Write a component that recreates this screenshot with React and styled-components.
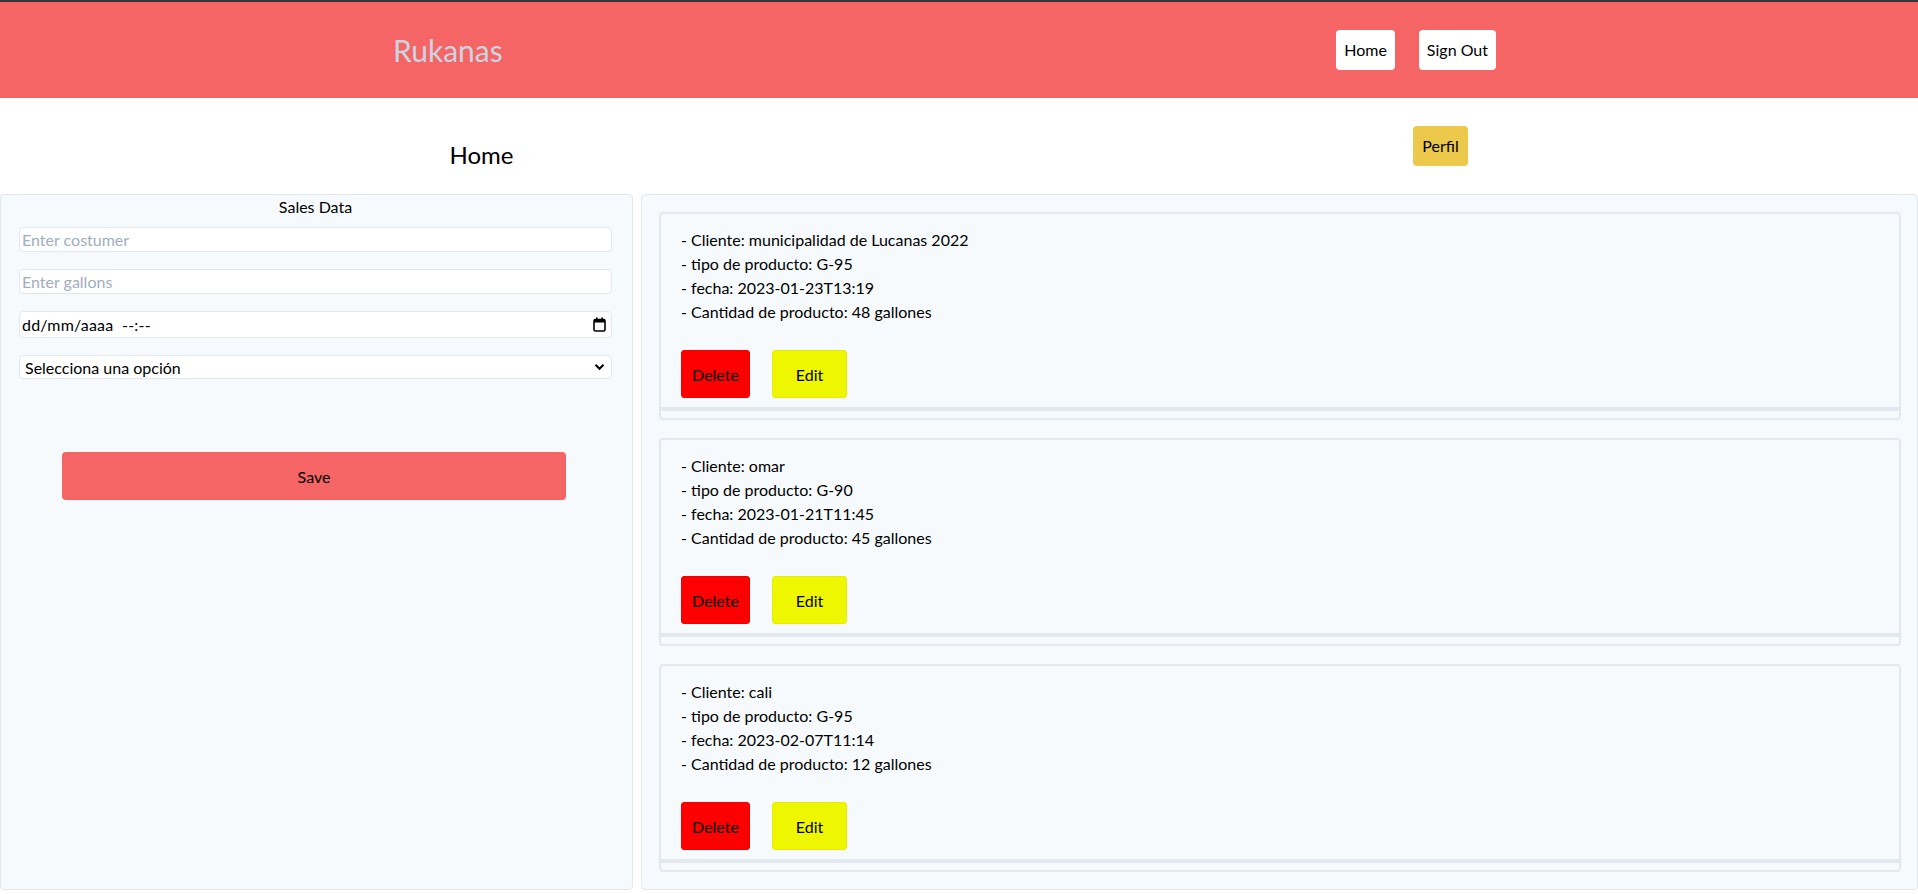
import React from "react";
import styled, { createGlobalStyle, css } from "styled-components";

const GlobalStyle = createGlobalStyle`
  * { box-sizing: border-box; }
  html, body { margin: 0; padding: 0; background: #ffffff; }
  body {
    font-family: Lato, "Open Sans", "Noto Sans", sans-serif;
    font-size: 16px;
    color: #000000;
  }
  button, input, select { font-family: inherit; }
`;

const Header = styled.header`
  display: flex;
  align-items: center;
  justify-content: space-between;
  height: 98px;
  border-top: 2px solid #35363a;
  background: #f56565;
  padding: 0 422px 0 393px;
`;

const Brand = styled.div`
  font-size: 30px;
  line-height: 1;
  color: #cbd5e0;
`;

const NavGroup = styled.nav`
  display: flex;
  gap: 24px;
`;

const NavButton = styled.button`
  background: #ffffff;
  border: none;
  border-radius: 4px;
  padding: 8px;
  font-size: 16px;
  line-height: 24px;
  color: #000000;
  cursor: pointer;
`;

const SubBar = styled.div`
  display: grid;
  grid-template-columns: 1fr 1fr;
  align-items: center;
  justify-items: center;
  height: 96px;
`;

const PageTitle = styled.h2`
  margin: 0 0 0 4px;
  padding-top: 18px;
  font-size: 24px;
  font-weight: 400;
  line-height: 32px;
`;

const ProfileButton = styled.button`
  background: #ecc94b;
  border: none;
  border-radius: 4px;
  padding: 8px 9px;
  margin-left: 4px;
  font-size: 16px;
  line-height: 24px;
  color: #000000;
  cursor: pointer;
`;

const Main = styled.main`
  display: flex;
  gap: 8px;
  height: 696px;
`;

const Panel = styled.section`
  background: #f7fafc;
  border: 1px solid #e2e8f0;
  border-radius: 4px;
`;

const FormPanel = styled(Panel)`
  flex: none;
  width: 633px;
  padding: 0 20px 0 18px;
  display: flex;
  flex-direction: column;
`;

const FormTitle = styled.div`
  text-align: center;
  line-height: 24px;
  margin-bottom: 8px;
`;

const Fields = styled.div`
  display: flex;
  flex-direction: column;
  gap: 17px;
`;

const fieldBase = css`
  width: 100%;
  background: #ffffff;
  border: 1px solid #e2e8f0;
  border-radius: 4px;
  font-size: 16px;
  color: #000000;
`;

const TextInput = styled.input`
  ${fieldBase};
  height: 25px;
  padding: 1px 2px;
  outline: none;
  &::placeholder { color: #a0aec0; }
`;

const DateField = styled.div`
  ${fieldBase};
  height: 27px;
  padding: 0 5px 0 2px;
  display: flex;
  align-items: center;
  justify-content: space-between;
`;

const DateText = styled.span`
  letter-spacing: 0.2px;
  white-space: pre;
`;

const SelectWrap = styled.div`
  position: relative;
`;

const Select = styled.select`
  ${fieldBase};
  height: 24px;
  padding: 0 24px 0 5px;
  appearance: none;
  -webkit-appearance: none;
  outline: none;
`;

const Chevron = styled.svg`
  position: absolute;
  right: 7px;
  top: 8px;
  pointer-events: none;
`;

const SaveButton = styled.button`
  align-self: center;
  width: 504px;
  height: 48px;
  margin-top: 73px;
  margin-left: -3px;
  background: #f56565;
  border: none;
  border-radius: 4px;
  font-size: 16px;
  color: #000000;
  cursor: pointer;
`;

const ListPanel = styled(Panel)`
  flex: 1;
  padding: 17px 16px 17px 17px;
  display: flex;
  flex-direction: column;
  gap: 18px;
`;

const Card = styled.article`
  border: 2px solid #e2e8f0;
  border-radius: 4px;
  padding-bottom: 7px;
`;

const CardBody = styled.div`
  padding: 14px 20px 9px 20px;
  border-bottom: 4px solid #e2e8f0;
`;

const Line = styled.p`
  margin: 0;
  line-height: 24px;
`;

const Actions = styled.div`
  display: flex;
  gap: 22px;
  margin-top: 26px;
`;

const ActionButton = styled.button`
  width: ${(p) => (p.$variant === "delete" ? "69px" : "75px")};
  height: 48px;
  padding: 0;
  border: 1px solid ${(p) => (p.$variant === "delete" ? "#f00000" : "#e6ee00")};
  border-radius: 3px;
  background: ${(p) => (p.$variant === "delete" ? "#ff0000" : "#eef700")};
  font-size: 16px;
  color: #000000;
  cursor: pointer;
`;

const sales = [
  { cliente: "municipalidad de Lucanas 2022", tipo: "G-95", fecha: "2023-01-23T13:19", cantidad: 48 },
  { cliente: "omar", tipo: "G-90", fecha: "2023-01-21T11:45", cantidad: 45 },
  { cliente: "cali", tipo: "G-95", fecha: "2023-02-07T11:14", cantidad: 12 },
];

function CalendarIcon() {
  return (
    <svg width="13" height="15" viewBox="0 0 13 15" aria-hidden="true">
      <rect x="1" y="2.5" width="11" height="11.5" rx="1.5" fill="none" stroke="#000" strokeWidth="1.6" />
      <rect x="1" y="2.5" width="11" height="3" fill="#000" />
      <rect x="3" y="0.5" width="1.6" height="3" fill="#000" />
      <rect x="8.4" y="0.5" width="1.6" height="3" fill="#000" />
    </svg>
  );
}

export default function App() {
  return (
    <>
      <GlobalStyle />
      <Header>
        <Brand>Rukanas</Brand>
        <NavGroup>
          <NavButton>Home</NavButton>
          <NavButton>Sign Out</NavButton>
        </NavGroup>
      </Header>
      <SubBar>
        <PageTitle>Home</PageTitle>
        <ProfileButton>Perfil</ProfileButton>
      </SubBar>
      <Main>
        <FormPanel>
          <FormTitle>Sales Data</FormTitle>
          <Fields>
            <TextInput placeholder="Enter costumer" />
            <TextInput placeholder="Enter gallons" />
            <DateField>
              <DateText>dd/mm/aaaa  --:--</DateText>
              <CalendarIcon />
            </DateField>
            <SelectWrap>
              <Select defaultValue="">
                <option value="">Selecciona una opción</option>
                <option value="G-90">G-90</option>
                <option value="G-95">G-95</option>
              </Select>
              <Chevron width="11" height="8" viewBox="0 0 11 8" aria-hidden="true">
                <path d="M1.5 1.8 L5.5 5.8 L9.5 1.8" fill="none" stroke="#000" strokeWidth="2" />
              </Chevron>
            </SelectWrap>
          </Fields>
          <SaveButton>Save</SaveButton>
        </FormPanel>
        <ListPanel>
          {sales.map((s) => (
            <Card key={s.fecha}>
              <CardBody>
                <Line>- Cliente: {s.cliente}</Line>
                <Line>- tipo de producto: {s.tipo}</Line>
                <Line>- fecha: {s.fecha}</Line>
                <Line>- Cantidad de producto: {s.cantidad} gallones</Line>
                <Actions>
                  <ActionButton $variant="delete">Delete</ActionButton>
                  <ActionButton $variant="edit">Edit</ActionButton>
                </Actions>
              </CardBody>
            </Card>
          ))}
        </ListPanel>
      </Main>
    </>
  );
}
